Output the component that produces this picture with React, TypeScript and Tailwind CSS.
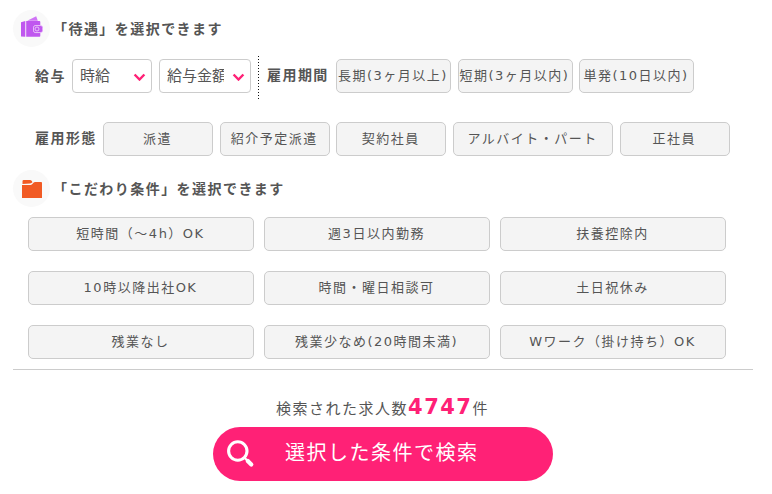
import React from "react";

const option =
  "box-border h-[34px] shrink-0 whitespace-nowrap rounded-[5px] border border-[#ccc] bg-[#f4f4f4] p-0 pr-px text-center text-[13px] leading-[32px] tracking-[1.5px] text-[#555]";

function Option({ label, size }: { label: string; size: string }) {
  return (
    <button type="button" className={`${option} ${size}`}>
      {label}
    </button>
  );
}

function Picker({ value, size }: { value: string; size: string }) {
  return (
    <div
      className={`flex h-[34px] shrink-0 items-center rounded-[4px] border border-[#ccc] bg-white pl-[7px] pr-[5px] tracking-normal ${size}`}
    >
      <span className="min-w-0 flex-1 overflow-hidden whitespace-nowrap text-[15px] leading-[30px]">{value}</span>
      <svg className="ml-[8px] shrink-0" width="13" height="9" viewBox="0 0 13 9" fill="none">
        <path d="M1.6 1.6 6.5 6.6 11.4 1.6" transform="translate(0 .9)" stroke="#ff2176" strokeWidth="2.4" />
      </svg>
    </div>
  );
}

function Heading({ icon, text }: { icon: React.ReactNode; text: string }) {
  return (
    <div className="flex h-[37px] items-center">
      <div className="flex h-[37px] w-[37px] items-center justify-center rounded-full bg-[#f9f9f9]">{icon}</div>
      <h2 className="ml-[3px] text-[14px] font-bold leading-[20px]">{text}</h2>
    </div>
  );
}

const wallet = (
  <svg className="mb-[3px] ml-px" width="22" height="22" viewBox="0 0 22 22">
    <path d="M6.2 4.7 15.2.2l1.6 4.5z" fill="#cf74f5" />
    <path d="M0 6.3 4.3 5v15.8L0 20.6zM5.2 5h13.3q.8 0 .8 1v3h-4.3q-3 .6-3 4t3 4h4.3v3q0 .8-.8.8H5.2z" fill="#c057ef" />
    <rect x="12.5" y="9.6" width="9.2" height="7" rx="2" fill="#c057ef" stroke="#ecc9fb" strokeWidth=".7" />
    <circle cx="16" cy="13" r="2" fill="none" stroke="#ecc9fb" strokeWidth=".9" />
  </svg>
);

const folder = (
  <svg className="ml-px" width="20" height="18" viewBox="0 0 20 18">
    <path d="M.5 4V1.2Q.5 0 1.7 0H8q1 0 1.6.8l.9 1.5Q9.5 3.4 8 3.4z" fill="#f15a24" />
    <path d="M0 5h8.6q1.4 0 2.2-1.4Q11.5 2 13 2h6.2q.8 0 .8 1v15H0z" fill="#f15a24" />
  </svg>
);

const conditions = [
  "短時間（～4h）OK",
  "週3日以内勤務",
  "扶養控除内",
  "10時以降出社OK",
  "時間・曜日相談可",
  "土日祝休み",
  "残業なし",
  "残業少なめ(20時間未満)",
  "Wワーク（掛け持ち）OK",
];

export default function App() {
  return (
    <main className="h-[494px] w-[772px] overflow-hidden bg-white pl-[13px] pt-[10px] font-['DejaVu_Sans','Noto_Sans_CJK_JP',sans-serif] text-[14px] tracking-[1.45px] text-[#555]">
      <Heading icon={wallet} text="「待遇」を選択できます" />

      <div className="mt-[9px] flex h-[45px] pl-[22px]">
        <div className="w-[37px] shrink-0 whitespace-nowrap pt-[10px] font-bold leading-[20px]">給与</div>
        <div className="flex gap-[7px] pt-[3px]">
          <Picker value="時給" size="w-[80px]" />
          <Picker value="給与金額" size="w-[92px]" />
        </div>
        <svg className="ml-[7px] shrink-0" width="1" height="45" viewBox="0 0 1 45">
          <path d="M.5 0v45" stroke="#111" strokeDasharray="1 2" />
        </svg>
        <div className="ml-[8px] w-[69px] shrink-0 whitespace-nowrap pt-[9px] font-bold leading-[20px]">雇用期間</div>
        <div className="flex gap-[6.5px] pt-[3px]">
          <Option label="長期(3ヶ月以上)" size="w-[115px]" />
          <Option label="短期(3ヶ月以内)" size="w-[115px]" />
          <Option label="単発(10日以内)" size="w-[115px]" />
        </div>
      </div>

      <div className="mt-[21px] flex h-[34px] pl-[22px]">
        <div className="w-[68px] shrink-0 whitespace-nowrap pt-[6px] font-bold leading-[20px]">雇用形態</div>
        <div className="flex gap-[6.7px]">
          <Option label="派遣" size="w-[110px]" />
          <Option label="紹介予定派遣" size="w-[110px]" />
          <Option label="契約社員" size="w-[110px]" />
          <Option label="アルバイト・パート" size="w-[160px]" />
          <Option label="正社員" size="w-[110px]" />
        </div>
      </div>

      <div className="mt-[14px]">
        <Heading icon={folder} text="「こだわり条件」を選択できます" />
      </div>

      <div className="mt-[10px] grid w-[713px] grid-cols-3 gap-x-[10px] gap-y-[20px] pl-[15px]">
        {conditions.map((label) => (
          <Option key={label} label={label} size="w-full" />
        ))}
      </div>

      <div className="mt-[10px] w-[740px] border-t border-[#ccc]" />

      <div className="w-[740px] pt-[22px]">
        <p className="flex h-[30px] items-baseline justify-center pr-px text-[15px] leading-[30px] tracking-[1.5px]">
          検索された求人数
          <strong className="text-[21px] font-bold text-[#ff2176]">4747</strong>
          件
        </p>
        <button
          type="button"
          className="mx-auto mt-[5px] flex h-[54px] w-[340px] items-center rounded-full bg-[#ff2176] pl-[13px] text-[20px] tracking-[1.5px] text-white"
        >
          <svg width="30" height="30" viewBox="0 0 30 30" fill="none" stroke="#fff">
            <circle cx="11.8" cy="12" r="9.2" strokeWidth="3.1" />
            <path d="m18.3 18.5 3 3" strokeWidth="2.2" />
            <path d="m21.8 22 3.5 3.5" strokeWidth="4.2" strokeLinecap="round" />
          </svg>
          <span className="ml-[29px] pb-[2px] leading-[30px]">選択した条件で検索</span>
        </button>
      </div>
    </main>
  );
}
